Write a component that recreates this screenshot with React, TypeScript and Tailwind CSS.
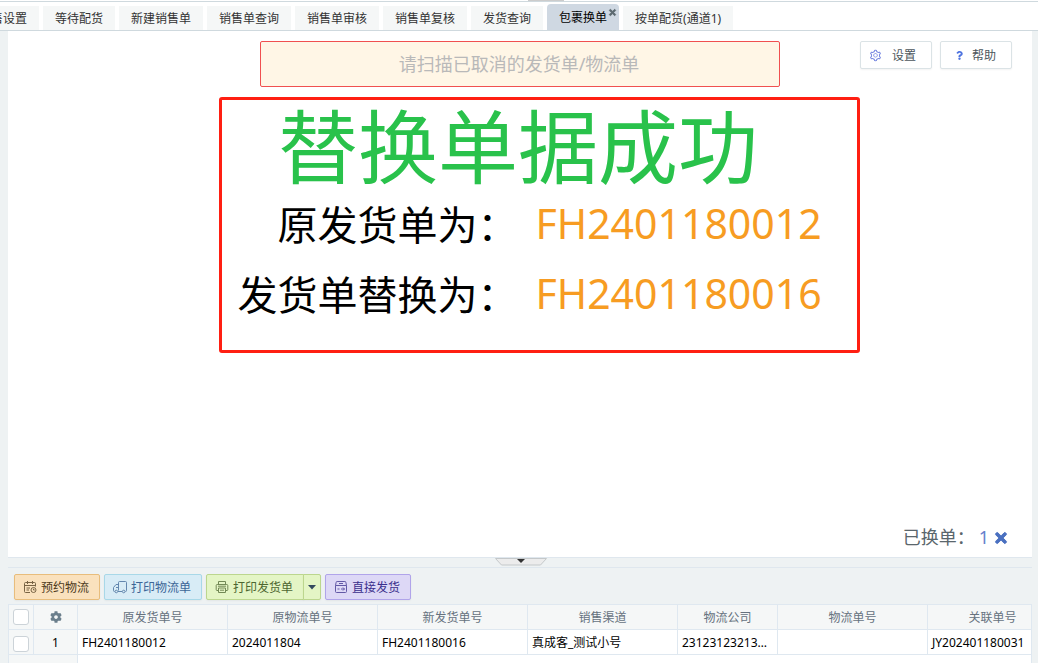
import React from "react";
import { FaCog, FaQuestion, FaTimes } from "react-icons/fa";
import { AiOutlineSetting } from "react-icons/ai";

const tabs = ["等待配货", "新建销售单", "销售单查询", "销售单审核", "销售单复核", "发货查询", "包裹换单", "按单配货(通道1)"];
const activeTab = "包裹换单";

const columns = [
  { name: "原发货单号", width: "w-[150px]" },
  { name: "原物流单号", width: "w-[150px]" },
  { name: "新发货单号", width: "w-[150px]" },
  { name: "销售渠道", width: "w-[150px]" },
  { name: "物流公司", width: "w-[100px]" },
  { name: "物流单号", width: "w-[150px]" },
  { name: "关联单号", width: "w-[130px]" },
];

const row = ["FH2401180012", "2024011804", "FH2401180016", "真成客_测试小号", "23123123213123", "", "JY202401180031"];

const iconProps = {
  width: 14,
  height: 14,
  viewBox: "0 0 14 14",
  fill: "none",
  stroke: "currentColor",
  className: "shrink-0 opacity-75",
  "aria-hidden": true,
} as const;

function CalendarIcon() {
  return (
    <svg {...iconProps}>
      <path d="M7 12.5H2.500a1 1 0 0 1-1-1v-8a1 1 0 0 1 1-1h9a1 1 0 0 1 1 1V6.500M1.500 5.500h11M4.500 1v3M9.500 1v3M3.500 8h3.500M3.500 10h2.500" />
      <circle cx="10.500" cy="10" r="2.500" />
      <path d="M10.500 8.700V10h1.200" />
    </svg>
  );
}

function TruckIcon() {
  return (
    <svg {...iconProps}>
      <path d="M5.500 10.500v-8a1 1 0 0 1 1-1h6a1 1 0 0 1 1 1v8a1 1 0 0 1-1 1M5.500 4.500H3L.5 7.500v3a1 1 0 0 0 1 1M5 11.500h4M3 7.500h2.500" />
      <circle cx="3.300" cy="11.500" r="1.300" />
      <circle cx="10.700" cy="11.500" r="1.300" />
    </svg>
  );
}

function PrinterIcon() {
  return (
    <svg {...iconProps}>
      <path d="M3.500 4.500V1.500h7v3M3 10.500H2a.8.8 0 0 1-.8-.8V5.500a1 1 0 0 1 1-1h9.600a1 1 0 0 1 1 1v4.200a.8.8 0 0 1-.8.8h-1M3.500 8h7v4.500h-7zM5 10.200h4M3 6.200h8" />
    </svg>
  );
}

function BoxIcon() {
  return (
    <svg {...iconProps}>
      <path d="M1.500 5.500v6a1 1 0 0 0 1 1h9a1 1 0 0 0 1-1v-6zM1.500 5.500l.6-3a1 1 0 0 1 1-1h7.800a1 1 0 0 1 1 1l.6 3M5 3.500h4M3.500 9h2M7 9h3.500M9 7.500L10.500 9 9 10.500" />
    </svg>
  );
}

function Caret() {
  return (
    <svg width="8" height="5" viewBox="0 0 8 5" aria-hidden="true">
      <path d="M0 0h8L4 4.500z" fill="currentColor" />
    </svg>
  );
}

function TabBar() {
  return (
    <nav className="relative flex h-[31px] items-end gap-1 overflow-hidden border-b border-[#cfd9de] bg-white">
      <span className="absolute inset-x-0 top-px h-px bg-[#cfd9de]" />
      <span className="absolute top-0 left-[528px] h-px w-9 bg-[#cccccc]" />
      <button className="flex h-6 w-[39px] shrink-0 items-center justify-end overflow-hidden bg-[#f5f7f7] pt-[2px] pr-3 whitespace-nowrap">
        销售设置
      </button>
      {tabs.map((tab) =>
        tab === activeTab ? (
          <button key={tab} className="relative h-[26px] shrink-0 rounded-t-sm bg-[#cfd8e2] px-3 pt-[2px] text-black">
            {tab}
            <FaTimes className="absolute top-1 right-[2px] size-[9px] stroke-[#5c6a70] stroke-[50px] text-[#5c6a70]" />
          </button>
        ) : (
          <button key={tab} className="h-6 shrink-0 bg-[#f5f7f7] px-3 pt-[2px]">
            {tab}
          </button>
        )
      )}
    </nav>
  );
}

function ResultRow({ label, value }: { label: string; value: string }) {
  return (
    <div className="grid h-[70px] grid-cols-[296px_1fr] items-center text-[40px] leading-none whitespace-nowrap">
      <span className="text-right text-black">{label}</span>
      <span className="pb-1 pl-[18px] text-[41px] text-[#f79c22]">{value}</span>
    </div>
  );
}

function ScanPanel() {
  const button =
    "flex h-7 w-[72px] items-center justify-between rounded-xs border border-[#dbe3e6] bg-white pr-[15px] shadow-xs";
  return (
    <main className="relative flex flex-1 flex-col items-center border-b border-[#dfe7ee] bg-white pt-[10px]">
      <input
        aria-label="请扫描已取消的发货单/物流单"
        placeholder="请扫描已取消的发货单/物流单"
        className="h-[46px] w-[520px] rounded-xs border border-[#f05050] bg-[#fff6e6] pr-[2px] text-center text-lg outline-none placeholder:text-[#b9b9b9]"
      />
      <div className="absolute top-[10px] right-5 flex gap-2 text-[#4c565c]">
        <button className={`${button} pl-2`}>
          <AiOutlineSetting className="size-[13px] text-[#7485e0]" />
          <span className="pt-[2px]">设置</span>
        </button>
        <button className={`${button} pl-[14px]`}>
          <FaQuestion className="size-[9px] text-[#4f74e0]" />
          <span className="pt-[2px]">帮助</span>
        </button>
      </div>
      <section className="mt-[10px] ml-[38px] w-[641px] rounded-[3px] border-[3px] border-[#ff1f12] pb-5">
        <h1 className="h-[90px] pr-[42px] text-center text-[80px] leading-[92px] font-normal text-[#29c24b]">
          替换单据成功
        </h1>
        <ResultRow label="原发货单为：" value="FH2401180012" />
        <ResultRow label="发货单替换为：" value="FH2401180016" />
      </section>
      <div className="mt-auto mr-[23px] mb-1 flex h-8 items-center self-end text-lg text-[#5a666c]">
        <span>已换单：</span>
        <span className="ml-1 text-[#6680cc]">1</span>
        <button aria-label="清空" className="ml-1 pt-[2px]">
          <FaTimes className="size-4 stroke-[#4a70c0] stroke-[30px] text-[#4a70c0]" />
        </button>
      </div>
    </main>
  );
}

function Splitter() {
  return (
    <div className="flex h-[10px] justify-center border-b border-[#dfe7ee] pl-[2px]">
      <svg width="52" height="8" viewBox="0 0 52 8" aria-hidden="true">
        <path d="M.5.500h51l-6 6.500h-39z" fill="#ececec" stroke="#c4c8ca" />
        <path d="M22 1h8l-4 4z" fill="#333" />
      </svg>
    </div>
  );
}

function Toolbar() {
  const base = "flex h-[26px] items-center gap-1 rounded-xs border pr-[10px] pl-2 shadow-xs";
  return (
    <div className="flex gap-1 px-[6px] pt-[6px] pb-1">
      <button className={`${base} border-[#e8bd7c] bg-[#fae1bd] text-[#4d3a1c]`}>
        <CalendarIcon />
        <span className="pt-[2px]">预约物流</span>
      </button>
      <button className={`${base} border-[#a8d8e8] bg-[#d8ecf6] text-[#3c6696]`}>
        <TruckIcon />
        <span className="pt-[2px]">打印物流单</span>
      </button>
      <div className="flex">
        <button className={`${base} rounded-r-none border-[#bcd68e] bg-[#e4f5c5] text-[#4d6630]`}>
          <PrinterIcon />
          <span className="pt-[2px]">打印发货单</span>
        </button>
        <button
          aria-label="更多打印选项"
          className="-ml-px flex h-[26px] w-[18px] items-center justify-center rounded-r-xs border border-[#bcd68e] bg-[#e4f5c5] text-[#34495e] shadow-xs"
        >
          <Caret />
        </button>
      </div>
      <button className={`${base} border-[#b0a4ea] bg-[#ddd8f6] text-[#3a2f8c]`}>
        <BoxIcon />
        <span className="pt-[2px]">直接发货</span>
      </button>
    </div>
  );
}

function Check({ label }: { label: string }) {
  return (
    <input
      type="checkbox"
      aria-label={label}
      className="mx-auto block size-4 appearance-none rounded-[3px] border border-[#ccd3d8] bg-white"
    />
  );
}

function OrderTable() {
  const cell = "h-[25px] border-r border-b border-[#dfe8f0] px-0 pb-0";
  return (
    <div className="h-[59px] overflow-hidden border border-b-0 border-[#dfe8f0] bg-white">
      <table className="w-[1049px] table-fixed border-separate border-spacing-0">
        <thead>
          <tr className="bg-[#f5f7f7] text-[#66727e]">
            <th className={`${cell} w-[25px] pt-0`}>
              <Check label="全选" />
            </th>
            <th className={`${cell} w-[44px] pt-0`}>
              <FaCog className="mx-auto size-3 text-[#6b7f8c]" />
            </th>
            {columns.map((c) => (
              <th key={c.name} className={`${cell} ${c.width} pt-[2px] font-normal`}>
                {c.name}
              </th>
            ))}
          </tr>
        </thead>
        <tbody className="text-black">
          <tr>
            <td className={`${cell} bg-[#f5f7f7] pt-[3px]`}>
              <Check label="选择第1行" />
            </td>
            <td className={`${cell} bg-[#f5f7f7] pt-[2px] text-center`}>1</td>
            {row.map((value, i) => (
              <td key={i} className={`${cell} truncate pt-[2px]`}>
                <div className="truncate px-1">{value}</div>
              </td>
            ))}
          </tr>
          <tr>
            <td colSpan={2} className={`${cell} bg-[#f5f7f7]`} />
            <td colSpan={7} className={cell} />
          </tr>
        </tbody>
      </table>
    </div>
  );
}

export default function App() {
  return (
    <div className="flex h-screen flex-col overflow-hidden bg-[#eef2f3] font-['Noto_Sans','Noto_Sans_CJK_SC',sans-serif] text-xs text-[#333]">
      <TabBar />
      <div className="flex min-h-0 flex-1 flex-col pr-[6px] pl-2">
        <ScanPanel />
        <Splitter />
        <Toolbar />
        <OrderTable />
      </div>
    </div>
  );
}
